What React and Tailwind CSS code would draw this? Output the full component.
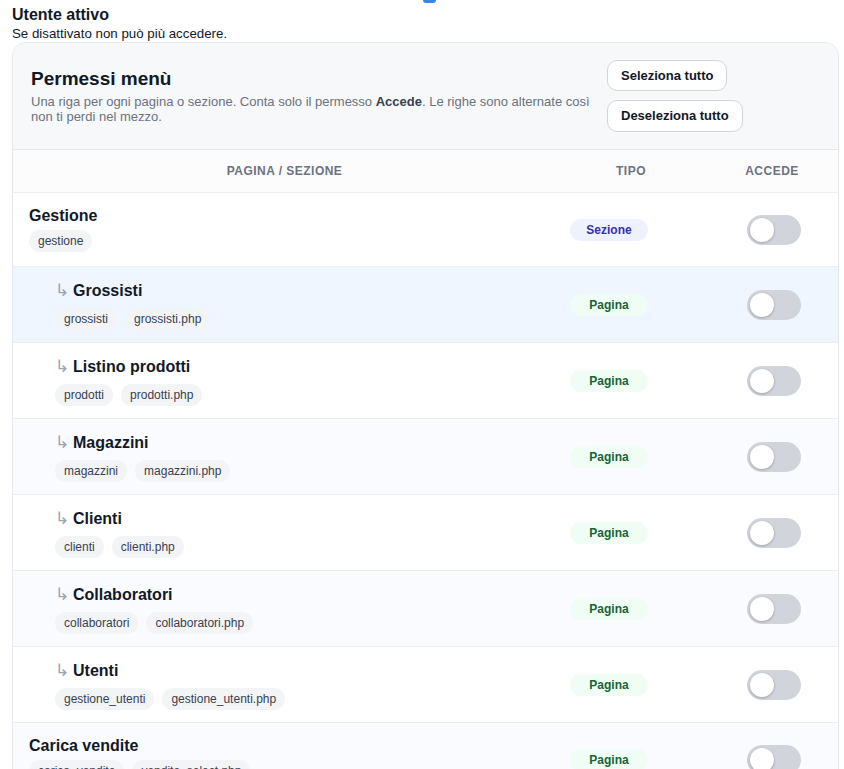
import { useState } from 'react';

const rows = [
  { title: 'Gestione', tags: ['gestione'], tipo: 'Sezione', sub: false },
  { title: 'Grossisti', tags: ['grossisti', 'grossisti.php'], tipo: 'Pagina', sub: true },
  { title: 'Listino prodotti', tags: ['prodotti', 'prodotti.php'], tipo: 'Pagina', sub: true },
  { title: 'Magazzini', tags: ['magazzini', 'magazzini.php'], tipo: 'Pagina', sub: true },
  { title: 'Clienti', tags: ['clienti', 'clienti.php'], tipo: 'Pagina', sub: true },
  { title: 'Collaboratori', tags: ['collaboratori', 'collaboratori.php'], tipo: 'Pagina', sub: true },
  { title: 'Utenti', tags: ['gestione_utenti', 'gestione_utenti.php'], tipo: 'Pagina', sub: true },
  { title: 'Carica vendite', tags: ['carica_vendite', 'vendite_select.php'], tipo: 'Pagina', sub: false },
];

function Toggle({ on, onClick }) {
  return (
    <button
      onClick={onClick}
      className={`flex h-[30px] w-[54px] items-center rounded-full px-[3px] ${on ? 'bg-[#4f46e5] justify-end' : 'bg-[#d1d5db] justify-start'}`}
    >
      <span className="h-6 w-6 rounded-full bg-white shadow-[0_1px_3px_rgba(0,0,0,0.25)]" />
    </button>
  );
}

export default function App() {
  const [perms, setPerms] = useState(rows.map(() => false));

  const toggle = (i) => setPerms((p) => p.map((v, j) => (j === i ? !v : v)));

  return (
    <div className="min-h-screen bg-white font-['Liberation_Sans',Arial,sans-serif] text-[#111827]">
      <div className="h-[3px] pl-[423px]">
        <div className="h-[3px] w-[13px] rounded-b-sm bg-[#3b82f6]" />
      </div>
      <div className="pl-3 pr-[5px]">
        <div className="pt-[2px] text-base font-bold leading-5">Utente attivo</div>
        <div className="text-[13.3px] leading-[17px] text-[#111827]">Se disattivato non può più accedere.</div>

        <div className="overflow-hidden rounded-[14px] border border-[#e5e7eb]">
          <div className="flex gap-4 border-b border-[#e5e7eb] bg-[#f7f8fa] pl-[18px] pr-4 pt-[17px] pb-[17px]">
            <div className="w-[560px] pt-[7px]">
              <h2 className="text-[19px] font-bold leading-6">Permessi menù</h2>
              <p className="mt-[3px] text-[13px] leading-[15px] text-[#6b7280]">
                Una riga per ogni pagina o sezione. Conta solo il permesso <b className="text-[#374151]">Accede</b>. Le righe sono alternate così non ti perdi nel mezzo.
              </p>
            </div>
            <div className="flex flex-col items-start gap-[9px]">
              <button
                onClick={() => setPerms(rows.map(() => true))}
                className="h-[31px] rounded-[10px] border border-[#d1d5db] bg-white px-[13px] text-[13px] font-bold"
              >
                Seleziona tutto
              </button>
              <button
                onClick={() => setPerms(rows.map(() => false))}
                className="h-[32px] rounded-[10px] border border-[#d1d5db] bg-white px-[13px] text-[13px] font-bold"
              >
                Deseleziona tutto
              </button>
            </div>
          </div>

          <div className="grid h-[42px] grid-cols-[543px_150px_1fr] items-center bg-[#fcfcfd] text-center text-xs font-bold uppercase tracking-[0.04em] text-[#6b7280]">
            <div>Pagina / Sezione</div>
            <div>Tipo</div>
            <div>Accede</div>
          </div>

          {rows.map((r, i) => (
            <div
              key={r.title}
              className={`grid grid-cols-[543px_150px_1fr] items-center border-t border-[#eceef2] ${
                i === 1 ? 'bg-[#eff6ff]' : i % 2 === 1 ? 'bg-[#f9fbfe]' : 'bg-white'
              }`}
            >
              <div className={`pt-[13px] ${r.sub ? 'pl-[42px] pb-[12px]' : 'pl-4 pb-[14px]'}`}>
                <div className={`flex items-center font-bold ${r.sub ? 'h-[22px]' : 'h-5'} text-base`}>
                  {r.sub && <span className="mr-[6px] w-3 text-[17px] font-normal text-[#9ca3af] font-['DejaVu_Sans',sans-serif]">↳</span>}
                  {r.title}
                </div>
                <div className={`flex gap-2 ${r.sub ? 'mt-[6px]' : 'mt-1'}`}>
                  {r.tags.map((t) => (
                    <span key={t} className="flex h-[22px] items-center rounded-full bg-[#f3f4f6] px-[9px] text-xs text-[#374151]">
                      {t}
                    </span>
                  ))}
                </div>
              </div>
              <div className="pl-[14px]">
                {r.tipo === 'Sezione' ? (
                  <span className="flex h-[22px] w-[78px] items-center justify-center rounded-full bg-[#eef2ff] text-xs font-bold text-[#3730a3]">
                    Sezione
                  </span>
                ) : (
                  <span className="flex h-[22px] w-[78px] items-center justify-center rounded-full bg-[#f0fdf4] text-xs font-bold text-[#166534]">
                    Pagina
                  </span>
                )}
              </div>
              <div className="pl-[41px]">
                <Toggle on={perms[i]} onClick={() => toggle(i)} />
              </div>
            </div>
          ))}
        </div>
      </div>
    </div>
  );
}
